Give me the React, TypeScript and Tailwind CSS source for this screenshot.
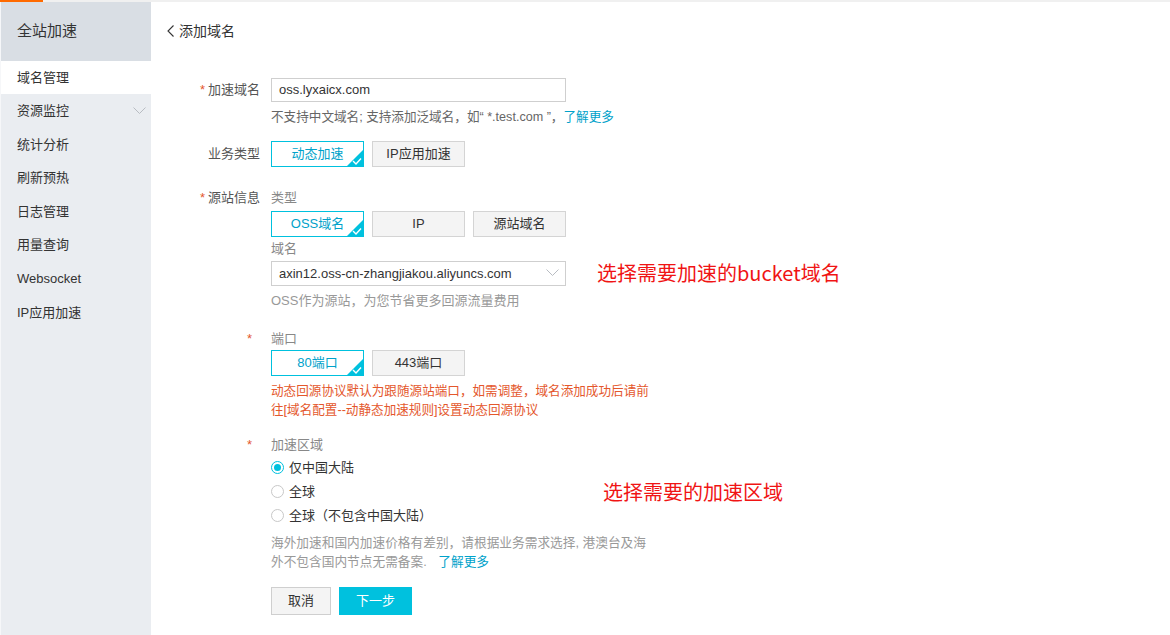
import React from "react";

const font = { fontFamily: '"Liberation Sans", "Noto Sans CJK SC", sans-serif' };
const noteFont = { fontFamily: '"Noto Sans CJK SC", sans-serif' };

const navItems = ["资源监控", "统计分析", "刷新预热", "日志管理", "用量查询", "Websocket", "IP应用加速"];

function Chevron({ className = "" }: { className?: string }) {
  return (
    <svg className={className} width="13" height="8" viewBox="0 0 13 8" fill="none">
      <polyline points="0.5,0.5 6.5,6.5 12.5,0.5" stroke="#b8bcc2" strokeWidth="1" />
    </svg>
  );
}

function Choice({ label, active = false }: { label: string; active?: boolean }) {
  return (
    <div
      className={
        "relative flex h-[26px] w-[93px] items-center justify-center border text-[13px] " +
        (active ? "border-[#00c1de] bg-white text-[#00a2ca]" : "border-[#d4d4d4] bg-[#f4f4f4] text-[#333]")
      }
    >
      {label}
      {active && (
        <svg className="absolute bottom-0 right-0" width="16" height="16" viewBox="0 0 16 16">
          <polygon points="16,0 16,16 0,16" fill="#00c1de" />
          <polyline points="6,11 9,14 14,8.5" fill="none" stroke="#fff" strokeWidth="1.4" />
        </svg>
      )}
    </div>
  );
}

function Radio({ label, checked = false }: { label: string; checked?: boolean }) {
  return (
    <div className="flex h-[24px] items-center gap-[5px] text-[13px] text-[#333]">
      <span
        className={
          "flex h-[13px] w-[13px] items-center justify-center rounded-full border bg-white " +
          (checked ? "border-[#00c1de]" : "border-[#c8c8c8]")
        }
      >
        {checked && <span className="h-[7px] w-[7px] rounded-full bg-[#00c1de]" />}
      </span>
      {label}
    </div>
  );
}

function Label({ text, star = false, starOnly = false }: { text?: string; star?: boolean; starOnly?: boolean }) {
  return (
    <div className="w-[120px] shrink-0 pr-[11px] text-right text-[13px] text-[#555]">
      {starOnly ? (
        <span className="pr-[8px] text-[#e4572c]">*</span>
      ) : (
        <>
          {star && <span className="mr-[3px] text-[#e4572c]">*</span>}
          {text}
        </>
      )}
    </div>
  );
}

export default function App() {
  return (
    <div className="flex h-[635px] w-[1170px] flex-col overflow-hidden bg-white" style={font}>
      <div className="flex h-[2px] shrink-0 bg-[#f0f0f0]">
        <div className="h-full w-[43px] bg-[#ff6a00]" />
      </div>
      <div className="flex min-h-0 flex-1">
        <aside className="flex w-[151px] shrink-0 flex-col border-l border-[#f6f7f9] bg-[#eaedf1]">
          <div className="flex h-[59px] items-center bg-[#d9dee4] pl-[16px] text-[15px] text-[#333]">全站加速</div>
          <div className="flex h-[33px] items-center bg-white pl-[16px] text-[13px] text-[#333]">域名管理</div>
          {navItems.map((item, i) => (
            <div key={item} className="flex h-[33.6px] items-center justify-between pl-[16px] pr-[5px] text-[13px] text-[#333]">
              {item}
              {i === 0 && <Chevron />}
            </div>
          ))}
        </aside>

        <main className="flex-1">
          <div className="flex h-[58px] items-center gap-[4px] pl-[16px] text-[14px] text-[#333]">
            <svg width="8" height="12" viewBox="0 0 8 12" fill="none">
              <polyline points="6.5,0.5 1,6 6.5,11.5" stroke="#333" strokeWidth="1.1" />
            </svg>
            添加域名
          </div>

          <div className="mt-[18px] flex items-center">
            <Label text="加速域名" star />
            <div className="flex h-[24px] w-[295px] items-center border border-[#cfcfcf] px-[7px] text-[13px] text-[#333]">
              oss.lyxaicx.com
            </div>
          </div>
          <div className="mt-[6px] pl-[120px] text-[12.6px] text-[#666]">
            不支持中文域名; 支持添加泛域名，如“ *.test.com ”，<span className="text-[#00a2ca]">了解更多</span>
          </div>

          <div className="mt-[14px] flex items-center">
            <Label text="业务类型" />
            <div className="flex gap-[8px]">
              <Choice label="动态加速" active />
              <Choice label="IP应用加速" />
            </div>
          </div>

          <div className="mt-[21px] flex items-center leading-[20px]">
            <Label text="源站信息" star />
            <span className="text-[13px] text-[#888]">类型</span>
          </div>
          <div className="mt-[3px] flex gap-[8px] pl-[120px]">
            <Choice label="OSS域名" active />
            <Choice label="IP" />
            <Choice label="源站域名" />
          </div>
          <div className="mt-[2px] pl-[120px] text-[13px] leading-[20px] text-[#888]">域名</div>
          <div className="mt-[2px] flex items-center pl-[120px]">
            <div className="flex h-[25px] w-[295px] items-center justify-between border border-[#cfcfcf] pl-[7px] pr-[6px] text-[13px] text-[#333]">
              axin12.oss-cn-zhangjiakou.aliyuncs.com
              <Chevron />
            </div>
            <span className="ml-[31px] text-[20px] leading-none text-[#f01414]" style={noteFont}>
              选择需要加速的bucket域名
            </span>
          </div>
          <div className="mt-[5px] pl-[120px] text-[13px] leading-[20px] text-[#999]">OSS作为源站，为您节省更多回源流量费用</div>

          <div className="mt-[18px] flex items-center leading-[20px]">
            <Label starOnly />
            <span className="text-[13px] text-[#888]">端口</span>
          </div>
          <div className="mt-[1px] flex gap-[8px] pl-[120px]">
            <Choice label="80端口" active />
            <Choice label="443端口" />
          </div>
          <div className="mt-[6px] pl-[120px] text-[12.6px] leading-[19px] text-[#e4572c]">
            动态回源协议默认为跟随源站端口，如需调整，域名添加成功后请前
            <br />
            往[域名配置--动静态加速规则]设置动态回源协议
          </div>

          <div className="mt-[15px] flex items-center leading-[20px]">
            <Label starOnly />
            <span className="text-[13px] text-[#888]">加速区域</span>
          </div>
          <div className="mt-[1px] pl-[120px]">
            <Radio label="仅中国大陆" checked />
            <div className="flex h-[24px] items-center">
              <div className="w-[332px]">
                <Radio label="全球" />
              </div>
              <span className="text-[20px] leading-none text-[#f01414]" style={noteFont}>
                选择需要的加速区域
              </span>
            </div>
            <Radio label="全球（不包含中国大陆）" />
          </div>
          <div className="mt-[6px] pl-[120px] text-[12.7px] leading-[19px] text-[#999]">
            海外加速和国内加速价格有差别，请根据业务需求选择, 港澳台及海
            <br />
            外不包含国内节点无需备案. <span className="ml-[8px] text-[#00a2ca]">了解更多</span>
          </div>

          <div className="mt-[15px] flex gap-[8px] pl-[120px]">
            <div className="flex h-[28px] w-[60px] items-center justify-center border border-[#cfcfcf] bg-[#f4f4f4] text-[13px] text-[#333]">
              取消
            </div>
            <div className="flex h-[28px] w-[73px] items-center justify-center bg-[#00c1de] text-[13px] text-white">下一步</div>
          </div>
        </main>
      </div>
    </div>
  );
}
